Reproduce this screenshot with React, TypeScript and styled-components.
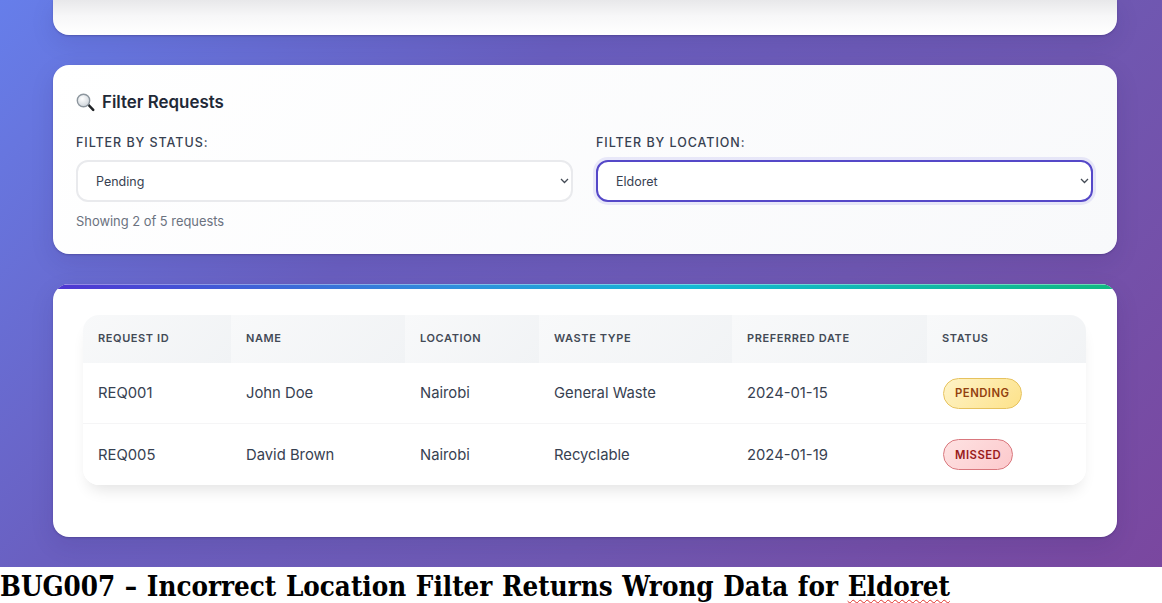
import React from "react";
import styled, { createGlobalStyle } from "styled-components";

const GlobalStyle = createGlobalStyle`
  html, body {
    margin: 0;
    padding: 0;
    height: 603px;
    overflow: hidden;
    background: #fff;
    font-family: "Inter", "Liberation Sans", sans-serif;
  }
`;

interface Request {
  id: string;
  name: string;
  location: string;
  wasteType: string;
  date: string;
  status: "pending" | "missed";
}

const columns = [
  { label: "Request ID", width: 148 },
  { label: "Name", width: 174 },
  { label: "Location", width: 134 },
  { label: "Waste Type", width: 193 },
  { label: "Preferred Date", width: 195 },
  { label: "Status", width: 159 },
];

const requests: Request[] = [
  { id: "REQ001", name: "John Doe", location: "Nairobi", wasteType: "General Waste", date: "2024-01-15", status: "pending" },
  { id: "REQ005", name: "David Brown", location: "Nairobi", wasteType: "Recyclable", date: "2024-01-19", status: "missed" },
];

const chevron =
  "data:image/svg+xml,%3Csvg xmlns='http://www.w3.org/2000/svg' width='9' height='6' viewBox='0 0 9 6'%3E%3Cpath d='M1 1l3.5 3.5L8 1' fill='none' stroke='%23444b55' stroke-width='1.3'/%3E%3C/svg%3E";

const MagnifierIcon = () => (
  <svg width="19" height="19" viewBox="0 0 19 19" aria-hidden="true">
    <defs>
      <radialGradient id="lens" cx="0.4" cy="0.35" r="0.75">
        <stop offset="0" stopColor="#ffffff" />
        <stop offset="1" stopColor="#c9d0d7" />
      </radialGradient>
    </defs>
    <path d="M11.2 12.2l1.6-1.6 5.3 5.3c.6.6.6 1.2 0 1.8s-1.2.6-1.8 0z" fill="#1f2225" />
    <circle cx="7.5" cy="7.5" r="6.2" fill="url(#lens)" stroke="#8d969e" strokeWidth="1.4" />
  </svg>
);

const App = () => (
  <>
    <GlobalStyle />
    <Backdrop>
      <ClippedCard />
      <FilterCard>
        <FilterTitle>
          <MagnifierIcon />
          Filter Requests
        </FilterTitle>
        <FilterGrid>
          <FilterField>
            <FilterLabel htmlFor="status">Filter by Status:</FilterLabel>
            <FilterSelect id="status" defaultValue="pending">
              <option value="pending">Pending</option>
              <option value="missed">Missed</option>
            </FilterSelect>
          </FilterField>
          <FilterField>
            <FilterLabel htmlFor="location">Filter by Location:</FilterLabel>
            <FilterSelect id="location" defaultValue="eldoret" $focused>
              <option value="eldoret">Eldoret</option>
              <option value="nairobi">Nairobi</option>
            </FilterSelect>
          </FilterField>
        </FilterGrid>
        <ResultCount>Showing 2 of 5 requests</ResultCount>
      </FilterCard>
      <TableCard>
        <RequestsTable>
          <colgroup>
            {columns.map((col) => (
              <col key={col.label} width={col.width} />
            ))}
          </colgroup>
          <thead>
            <tr>
              {columns.map((col) => (
                <HeadCell key={col.label}>{col.label}</HeadCell>
              ))}
            </tr>
          </thead>
          <tbody>
            {requests.map((req) => (
              <tr key={req.id}>
                <BodyCell>{req.id}</BodyCell>
                <BodyCell>{req.name}</BodyCell>
                <BodyCell>{req.location}</BodyCell>
                <BodyCell>{req.wasteType}</BodyCell>
                <BodyCell>{req.date}</BodyCell>
                <BodyCell>
                  <StatusBadge $status={req.status}>{req.status}</StatusBadge>
                </BodyCell>
              </tr>
            ))}
          </tbody>
        </RequestsTable>
      </TableCard>
    </Backdrop>
    <Caption>
      BUG007 – Incorrect Location Filter Returns Wrong Data for <Misspelled>Eldoret</Misspelled>
    </Caption>
  </>
);

const cardShadow = "0 1px 2px rgba(40, 30, 90, 0.3), 0 8px 24px rgba(30, 20, 80, 0.1)";

const Backdrop = styled.div`
  height: 567px;
  box-sizing: border-box;
  padding: 0 45px 0 53px;
  display: flex;
  flex-direction: column;
  gap: 30px;
  overflow: hidden;
  background: linear-gradient(135deg, #667eea 0%, #6a5fc0 35%, #6f58b2 65%, #7a479f 100%);
`;

const ClippedCard = styled.div`
  height: 35px;
  flex: none;
  border-radius: 0 0 16px 16px;
  background: linear-gradient(180deg, #e8e8ea 0%, #f7f7f8 45%, #ffffff 100%);
  box-shadow: ${cardShadow};
`;

const FilterCard = styled.section`
  height: 189px;
  flex: none;
  box-sizing: border-box;
  padding: 26px 23px 0;
  border-radius: 16px;
  background: linear-gradient(135deg, #ffffff 0%, #f8f9fb 100%);
  box-shadow: ${cardShadow};
`;

const FilterTitle = styled.h2`
  margin: 0 0 22px;
  display: flex;
  align-items: center;
  gap: 7px;
  height: 22px;
  font-size: 16.9px;
  font-weight: 600;
  color: #1f2937;
`;

const FilterGrid = styled.div`
  display: grid;
  grid-template-columns: 497px 497px;
  gap: 23px;
`;

const FilterField = styled.div`
  display: flex;
  flex-direction: column;
  gap: 9px;
`;

const FilterLabel = styled.label`
  font-size: 12.5px;
  line-height: 16px;
  font-weight: 500;
  letter-spacing: 0.95px;
  text-transform: uppercase;
  color: #374151;
`;

const FilterSelect = styled.select<{ $focused?: boolean }>`
  appearance: none;
  height: 42px;
  box-sizing: border-box;
  padding: 0 24px 0 18px;
  border: 2px solid ${(p) => (p.$focused ? "#5548c8" : "#e9eaed")};
  border-radius: 12px;
  background: #fff url("${chevron}") no-repeat right 2px center;
  font-family: "Inter", "Liberation Sans", sans-serif;
  font-size: 12.5px;
  color: #374151;
  outline: none;
  box-shadow: ${(p) => (p.$focused ? "0 0 0 3px rgba(99, 91, 220, 0.12)" : "none")};
`;

const ResultCount = styled.p`
  margin: 12px 0 0;
  font-size: 12.9px;
  line-height: 16px;
  color: #6b7280;
`;

const TableCard = styled.section`
  height: 253px;
  flex: none;
  box-sizing: border-box;
  padding: 31px 31px 0 30px;
  border-radius: 16px;
  background: #fff;
  position: relative;
  overflow: hidden;
  box-shadow: ${cardShadow};

  &::before {
    content: "";
    position: absolute;
    top: 0;
    left: 0;
    right: 0;
    height: 4px;
    border-top: 1px solid rgba(255, 255, 255, 0.4);
    background: linear-gradient(90deg, #4f35d2 0%, #2f8fdc 38%, #14b8d4 60%, #10b981 100%);
  }
`;

const RequestsTable = styled.table`
  width: 1003px;
  table-layout: fixed;
  border-collapse: separate;
  border-spacing: 0;
  border-radius: 16px;
  box-shadow: 0 10px 16px -6px rgba(0, 0, 0, 0.12);
`;

const HeadCell = styled.th`
  height: 48px;
  box-sizing: border-box;
  padding: 0 0 2px 15px;
  text-align: left;
  font-size: 11px;
  font-weight: 600;
  letter-spacing: 0.6px;
  text-transform: uppercase;
  color: #434a56;
  background: linear-gradient(135deg, #f8f9fa 0%, #f1f3f5 100%);

  &:first-child {
    border-top-left-radius: 16px;
  }
  &:last-child {
    border-top-right-radius: 16px;
  }
`;

const BodyCell = styled.td`
  height: 61px;
  box-sizing: border-box;
  padding: 0 0 0 15px;
  font-size: 14.8px;
  color: #374151;
  background: #fff;
  border-bottom: 1px solid #f5f5f6;

  tr:last-child & {
    border-bottom: none;
  }
  tr:last-child &:first-child {
    border-bottom-left-radius: 16px;
  }
  tr:last-child &:last-child {
    border-bottom-right-radius: 16px;
  }
`;

const StatusBadge = styled.span<{ $status: Request["status"] }>`
  display: inline-flex;
  align-items: center;
  height: 31px;
  box-sizing: border-box;
  padding: 0 11px;
  margin-left: 1px;
  border-radius: 16px;
  border: 1px solid ${(p) => (p.$status === "pending" ? "#e6c25e" : "#d9777d")};
  background: ${(p) =>
    p.$status === "pending"
      ? "linear-gradient(135deg, #fef3c7 0%, #fde28a 100%)"
      : "linear-gradient(135deg, #fee2e2 0%, #fcc9cc 100%)"};
  color: ${(p) => (p.$status === "pending" ? "#92400e" : "#991b1b")};
  font-size: 11.3px;
  font-weight: 600;
  letter-spacing: 0.5px;
  text-transform: uppercase;
`;

const Caption = styled.h1`
  margin: 0;
  height: 36px;
  line-height: 38px;
  font-family: "DejaVu Serif", "Liberation Serif", serif;
  font-stretch: condensed;
  font-size: 27.5px;
  word-spacing: 1px;
  font-weight: 700;
  color: #000;
  white-space: nowrap;
`;

const Misspelled = styled.span`
  text-decoration: underline wavy #e0302a 1px;
  text-underline-offset: 3px;
`;

export default App;
